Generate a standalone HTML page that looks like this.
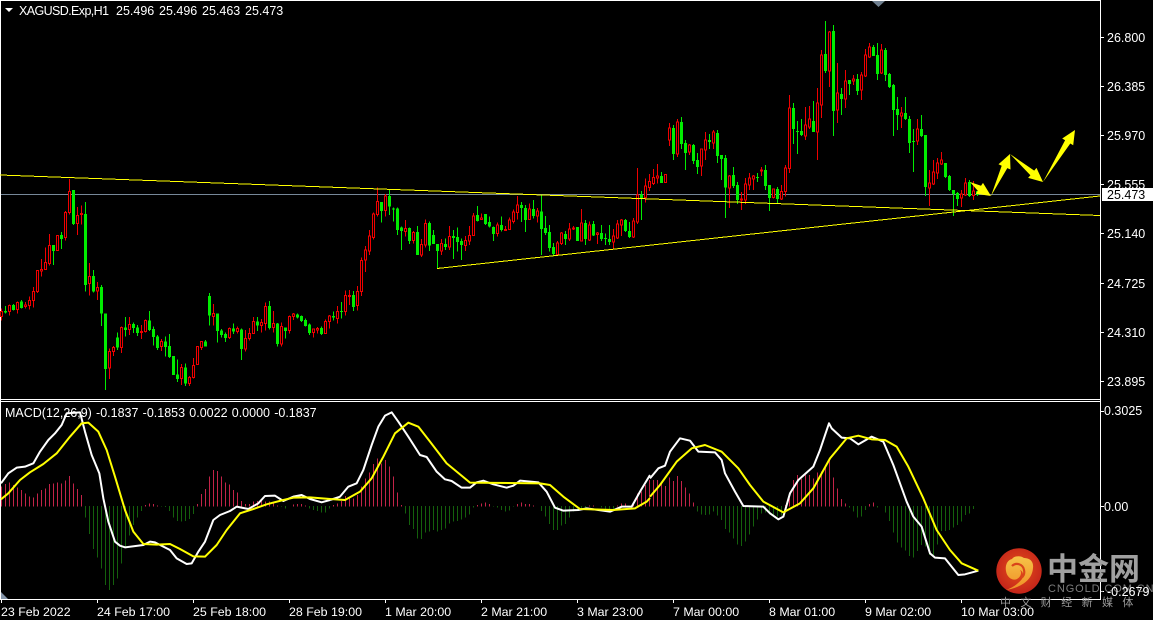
<!DOCTYPE html>
<html><head><meta charset="utf-8"><style>
html,body{margin:0;padding:0;background:#000}
#c{position:relative;width:1153px;height:620px;overflow:hidden;background:#000;font:12.5px/14px "Liberation Sans",sans-serif;color:#fff}
#c svg{position:absolute;left:0;top:0}
.t{position:absolute;white-space:pre}
path{fill:none}
.gw{stroke:#00ec00;stroke-width:3}
.gb{stroke:#00ec00;stroke-width:9}
.rw{stroke:#f00000;stroke-width:3}
.rb{stroke:#f00000;stroke-width:3;fill:#000}
.hr{stroke:#c32348;stroke-width:3}
.hg{stroke:#14600c;stroke-width:3}
.w{fill:none;stroke:#fff;stroke-width:6;stroke-linejoin:round}
.y{fill:none;stroke:#ff0;stroke-width:6;stroke-linejoin:round}
</style></head><body><div id="c">
<svg width="1153" height="620" viewBox="0 0 1153 620">
<g shape-rendering="crispEdges">
<rect x="0" y="0" width="1101" height="1" fill="#fff"/>
<rect x="0" y="0" width="1" height="600" fill="#fff"/>
<rect x="1100" y="0" width="1" height="600" fill="#fff"/>
<rect x="0" y="399" width="1101" height="1" fill="#fff"/>
<rect x="0" y="401" width="1101" height="1" fill="#fff"/>
<rect x="0" y="599" width="1101" height="1" fill="#fff"/>
<path d="M1101 37.5h3M1101 86.5h3M1101 135.5h3M1101 184.5h3M1101 233.5h3M1101 283.5h3M1101 332.5h3M1101 381.5h3M1101 411.5h3M1101 506.5h3M1101 591.5h3M1.5 600v3M97.5 600v3M193.5 600v3M289.5 600v3M385.5 600v3M481.5 600v3M577.5 600v3M673.5 600v3M769.5 600v3M865.5 600v3M961.5 600v3" stroke="#fff" stroke-width="1"/>
<rect x="1" y="194" width="1099" height="1" fill="#778899"/>
</g>
<path d="M872 1h13l-6.500 6z" style="fill:#708090"/>
<path d="M1 592l7 7h-7z" style="fill:#8494a8"/>

<g shape-rendering="crispEdges" transform="translate(0,170) scale(.33333)">
<path class="gw" d="M16.500 408V430M40.500 402V422M64.500 390V416M160.500 225V285M184.500 186V237M220.500 60V165M256.500 96V365M280.500 300V367M304.500 345V468M316.500 430V660M352.500 487V540M376.500 441V500M400.500 458V489M412.500 465V498M448.500 423V483M460.500 470V527M472.500 495V540M496.500 500V560M508.500 492V564M520.500 558V615M532.500 568V636M556.500 580V648M616.500 510V530M628.500 369V467M652.500 430V518M664.500 477V503M676.500 487V516M700.500 460V492M724.500 476V570M772.500 441V483M808.500 393V479M832.500 459V530M856.500 472V505M892.500 431V446"/>
<path class="gb" d="M16.500 423V427M40.500 405V420M64.500 394V414M160.500 225V243M184.500 195V207M220.500 60V162M256.500 132V345M280.500 318V365M304.500 351V431M316.500 430V597M352.500 502V533M376.500 472V480M400.500 462V474M412.500 472V489M448.500 451V480M460.500 477V501M472.500 499V534M496.500 514V531M508.500 528V561M520.500 558V615M532.500 613V627M556.500 592V640M616.500 514V530M628.500 378V437M652.500 430V483M664.500 481V495M676.500 492V504M700.500 475V484M724.500 478V537M772.500 454V467M808.500 408V474M832.500 460V522M856.500 472V483M892.500 433V443"/>
<path class="rw" d="M4.500 415V452M28.500 403V437M52.500 395V431M76.500 396V415M88.500 380V419M100.500 351V413M112.500 300V369M124.500 267V320M136.500 232V300M148.500 192V287M172.500 195V243M196.500 123V212M208.500 27V134M232.500 111V195M244.500 106V163M268.500 279V377M292.500 336V390M328.500 535V627M340.500 528V558M364.500 470V549M388.500 441V495M424.500 465V507M436.500 448V487M484.500 507V543M544.500 582V645M568.500 618V648M580.500 564V625M592.500 529V585M604.500 514V540M640.500 402V467M688.500 472V507M712.500 470V490M736.500 480V545M748.500 474V512M760.500 441V491M784.500 447V488M796.500 397V482M820.500 423V487M844.500 457V530M868.500 437V491M880.500 429V450"/>
<path class="rb" d="M1.500 425h6V440h-6zM25.500 406h6V424h-6zM49.500 397h6V419h-6zM73.500 405h6V410h-6zM85.500 391h6V407h-6zM97.500 364h6V392h-6zM109.500 301h6V365h-6zM121.500 298h6V303h-6zM133.500 277h6V298h-6zM145.500 226h6V280h-6zM169.500 196h6V242h-6zM193.500 127h6V203h-6zM205.500 65h6V128h-6zM229.500 136h6V161h-6zM241.500 130h6V134h-6zM265.500 319h6V341h-6zM289.500 352h6V363h-6zM325.500 544h6V594h-6zM337.500 532h6V544h-6zM361.500 473h6V532h-6zM385.500 463h6V479h-6zM421.500 485h6V488h-6zM433.500 451h6V485h-6zM481.500 514h6V530h-6zM541.500 592h6V626h-6zM565.500 622h6V640h-6zM577.500 586h6V623h-6zM589.500 529h6V584h-6zM601.500 515h6V533h-6zM637.500 430h6V440h-6zM685.500 475h6V503h-6zM709.500 475h6V484h-6zM733.500 505h6V537h-6zM745.500 491h6V506h-6zM757.500 454h6V491h-6zM781.500 457h6V467h-6zM793.500 409h6V460h-6zM817.500 460h6V473h-6zM841.500 469h6V522h-6zM865.500 439h6V482h-6zM877.500 432h6V440h-6z"/>
</g>

<g shape-rendering="crispEdges" transform="translate(296,250) scale(.33333)">
<path class="gw" d="M16.500 196V216M28.500 205V230M40.500 220V255M76.500 230V255M112.500 185V212M136.500 156V205M172.500 123V183"/>
<path class="gb" d="M16.500 198V213M28.500 210V228M40.500 224V249M76.500 234V252M112.500 198V202M136.500 183V186M172.500 135V171"/>
<path class="rw" d="M52.500 235V263M64.500 231V250M88.500 208V251M100.500 195V235M124.500 168V220M148.500 122V197M160.500 120V165M184.500 108V182M196.500 22V138"/>
<path class="rb" d="M49.500 237h6V248h-6zM61.500 235h6V240h-6zM85.500 214h6V250h-6zM97.500 198h6V215h-6zM121.500 184h6V205h-6zM145.500 136h6V185h-6zM157.500 136h6V139h-6zM181.500 124h6V167h-6zM193.500 31h6V125h-6z"/>
</g>

<g shape-rendering="crispEdges" transform="translate(300,170) scale(.33333)">
<path class="gw" d="M244.500 96V158M268.500 58V135M280.500 112V155M292.500 113V195M304.500 170V240M328.500 172V222M352.500 168V255M388.500 155V243M400.500 180V222M412.500 222V297M436.500 205V240M460.500 180V267M472.500 172V245M484.500 205V270M532.500 108V155M556.500 132V165M568.500 140V173M580.500 170V213M604.500 139V185M664.500 96V156M676.500 105V186M700.500 90V145M724.500 75V255M736.500 138V195M748.500 165V245M760.500 219V258M796.500 183V225M832.500 171V213M856.500 150V225M880.500 153V198M904.500 165V213M916.500 190V225M928.500 165V225M976.500 147V186M988.500 156V204"/>
<path class="gb" d="M244.500 96V123M268.500 78V110M280.500 115V119M292.500 115V180M304.500 172V183M328.500 174V213M352.500 186V255M388.500 159V226M400.500 195V222M412.500 222V243M436.500 222V231M460.500 198V204M472.500 201V216M484.500 213V225M532.500 135V153M556.500 132V162M568.500 156V170M580.500 171V192M604.500 165V180M664.500 105V114M676.500 114V150M700.500 117V138M724.500 125V177M736.500 174V189M748.500 186V234M760.500 231V252M796.500 192V207M832.500 171V213M856.500 159V207M880.500 162V196M904.500 189V207M916.500 204V207M928.500 207V216M976.500 150V183M988.500 183V201"/>
<path class="rw" d="M196.500 228V306M208.500 180V255M220.500 127V208M232.500 52V140M256.500 72V140M316.500 150V200M340.500 183V220M364.500 207V261M376.500 148V233M424.500 207V255M448.500 168V240M496.500 198V243M508.500 168V225M520.500 129V198M544.500 130V150M592.500 158V200M616.500 168V183M628.500 143V180M640.500 118V160M652.500 78V148M688.500 100V150M712.500 114V158M772.500 213V255M784.500 186V225M808.500 159V213M820.500 168V180M844.500 117V215M868.500 155V213M892.500 186V222M940.500 177V235M952.500 150V207M964.500 147V198M1000.500 144V204M1012.500 -6V162"/>
<path class="rb" d="M193.500 240h6V270h-6zM205.500 198h6V243h-6zM217.500 132h6V202h-6zM229.500 94h6V134h-6zM253.500 78h6V122h-6zM313.500 175h6V185h-6zM337.500 187h6V212h-6zM361.500 223h6V255h-6zM373.500 160h6V225h-6zM421.500 220h6V243h-6zM445.500 199h6V231h-6zM493.500 211h6V227h-6zM505.500 196h6V213h-6zM517.500 138h6V196h-6zM541.500 144h6V149h-6zM589.500 165h6V191h-6zM613.500 178h6V181h-6zM625.500 150h6V179h-6zM637.500 126h6V155h-6zM649.500 105h6V128h-6zM685.500 117h6V149h-6zM709.500 123h6V138h-6zM769.500 219h6V254h-6zM781.500 189h6V220h-6zM805.500 177h6V207h-6zM817.500 174h6V177h-6zM841.500 159h6V213h-6zM865.500 165h6V210h-6zM889.500 189h6V193h-6zM937.500 198h6V216h-6zM949.500 162h6V204h-6zM961.500 150h6V165h-6zM997.500 153h6V201h-6zM1009.500 75h6V156h-6z"/>
</g>

<g shape-rendering="crispEdges" transform="translate(640,100) scale(.33333)">
<path class="gw" d="M4.500 273V360M64.500 216V249M100.500 75V180M124.500 51V147M136.500 120V210M160.500 132V192M172.500 159V222M208.500 102V147M232.500 90V189M244.500 165V240M256.500 165V354M280.500 201V264M292.500 246V312M352.500 219V246M376.500 195V270M388.500 255V333"/>
<path class="gb" d="M4.500 283V295M64.500 228V249M100.500 84V162M124.500 66V132M136.500 129V159M160.500 135V183M172.500 180V201M208.500 120V126M232.500 99V168M244.500 165V177M256.500 174V262M280.500 225V258M292.500 255V300M352.500 231V234M376.500 210V258M388.500 255V294"/>
<path class="rw" d="M16.500 235V308M28.500 222V273M40.500 207V255M52.500 192V250M76.500 222V248M88.500 69V138M112.500 57V171M148.500 132V165M184.500 147V228M196.500 96V180M220.500 90V147M268.500 225V324M304.500 276V330M316.500 234V312M328.500 219V270M340.500 225V270M364.500 201V228"/>
<path class="rb" d="M13.500 258h6V293h-6zM25.500 245h6V262h-6zM37.500 232h6V250h-6zM49.500 228h6V234h-6zM73.500 223h6V248h-6zM85.500 84h6V120h-6zM109.500 66h6V162h-6zM145.500 135h6V156h-6zM181.500 147h6V198h-6zM193.500 120h6V150h-6zM217.500 96h6V129h-6zM265.500 228h6V264h-6zM301.500 297h6V300h-6zM313.500 252h6V300h-6zM325.500 234h6V255h-6zM337.500 228h6V237h-6zM361.500 210h6V213h-6z"/>
</g>

<g shape-rendering="crispEdges" transform="translate(770,10) scale(.33333)">
<path class="gw" d="M22.500 531V582M70.500 279V402M82.500 333V432M94.500 327V378M130.500 273V366M166.500 33V189M190.500 45V378M214.500 234V315M238.500 210V255M262.500 192V255M310.500 105V138M322.500 99V210M346.500 114V213M358.500 189V234M370.500 222V378M382.500 261V360M406.500 261V330M418.500 318V429M430.500 357V486M454.500 315V381M466.500 375V558M526.500 459V504M538.500 495V543M550.500 540V618M562.500 546V588M598.500 510V561M622.500 543V558"/>
<path class="gb" d="M22.500 537V567M70.500 294V357M82.500 363V366M94.500 363V375M130.500 333V366M166.500 132V183M190.500 63V303M214.500 252V267M238.500 210V222M262.500 207V243M310.500 111V138M322.500 135V192M346.500 120V195M358.500 192V231M370.500 225V300M382.500 297V315M406.500 309V327M418.500 327V399M430.500 393V396M454.500 357V378M466.500 375V531M526.500 459V501M538.500 498V540M550.500 540V552M562.500 549V567M598.500 516V558M622.500 543V555"/>
<path class="rw" d="M10.500 537V565M34.500 525V570M46.500 465V560M58.500 255V489M106.500 291V390M118.500 288V357M142.500 234V450M154.500 120V324M178.500 63V231M202.500 159V339M226.500 180V294M250.500 195V225M274.500 186V270M286.500 117V201M298.500 99V144M334.500 102V192M394.500 291V354M442.500 327V405M478.500 480V588M490.500 450V525M502.500 444V507M514.500 426V465M574.500 540V591M586.500 504V558M610.500 513V570"/>
<path class="rb" d="M7.500 537h6V563h-6zM31.500 545h6V567h-6zM43.500 474h6V545h-6zM55.500 294h6V476h-6zM103.500 345h6V378h-6zM115.500 327h6V351h-6zM139.500 279h6V366h-6zM151.500 135h6V285h-6zM175.500 66h6V183h-6zM199.500 249h6V300h-6zM223.500 213h6V267h-6zM247.500 207h6V213h-6zM271.500 195h6V240h-6zM283.500 135h6V198h-6zM295.500 111h6V141h-6zM331.500 120h6V189h-6zM391.500 309h6V318h-6zM439.500 357h6V393h-6zM475.500 519h6V534h-6zM487.500 486h6V522h-6zM499.500 459h6V489h-6zM511.500 450h6V462h-6zM571.500 552h6V564h-6zM583.500 519h6V555h-6zM607.500 543h6V556h-6z"/>
</g>

<g shape-rendering="crispEdges" stroke="#ffff00" stroke-width="1" fill="none">
<line x1="0" y1="175" x2="1100" y2="215.500"/>
<line x1="437" y1="268.500" x2="1100" y2="196"/>
</g>

<g fill="#ffff00">
<polygon points="970,182 981,185.800 983,182.900 991,196 975.800,193.700 977.800,190.800"/>
<polygon points="991,196 1001.700,165.700 998.500,164.300 1010,154 1010.500,169.500 1007.300,168.100"/>
<polygon points="1010,154 1034.200,170.600 1036.500,167.900 1043,182 1028.100,177.900 1030.400,175.200"/>
<polygon points="1043,182 1065.100,140.300 1062.200,138.500 1075,130 1073.200,145.300 1070.300,143.500"/>
</g>

<!-- histogram -->
<g shape-rendering="crispEdges" transform="translate(0,395) scale(.33333)">
<path class="hr" d="M4.500 275V335M16.500 267V335M28.500 262V335M40.500 270V335M52.500 277V335M64.500 285V335M76.500 295V335M88.500 305V335M100.500 307V335M112.500 295V335M124.500 285V335M136.500 280V335M148.500 267V335M160.500 266V335M172.500 262V335M184.500 265V335M196.500 257V335M208.500 243V335M220.500 265V335M232.500 282V335M244.500 300V335M436.500 330V335M448.500 325V335M460.500 327V335M472.500 332V335M592.500 327V335M604.500 297V335M616.500 282V335M628.500 245V335M640.500 225V335M652.500 228V335M664.500 245V335M676.500 262V335M688.500 268V335M700.500 285V335M712.500 292V335M724.500 318V335M736.500 327V335M748.500 327V335M760.500 320V335M772.500 318V335M784.500 315V335M796.500 320V335M808.500 320V335M820.500 322V335M832.500 332V335M880.500 328V335M892.500 327V335M904.500 327V335M916.500 332V335"/>
<path class="hg" d="M256.500 333V368M268.500 333V417M280.500 333V462M292.500 333V487M304.500 333V520M316.500 333V570M328.500 333V585M340.500 333V570M352.500 333V550M364.500 333V505M376.500 333V455M388.500 333V422M400.500 333V390M412.500 333V367M424.500 333V348M484.500 333V335M496.500 333V336M508.500 333V348M520.500 333V368M532.500 333V378M544.500 333V380M556.500 333V378M568.500 333V372M580.500 333V357M844.500 333V335M856.500 333V340M928.500 333V340M940.500 333V345M952.500 333V348M964.500 333V352M976.500 333V352M988.500 333V340"/>
</g>
<g shape-rendering="crispEdges" transform="translate(330,395) scale(.33333)">
<path class="hr" d="M10.500 330V335M22.500 325V335M34.500 318V335M46.500 303V335M58.500 305V335M70.500 310V335M82.500 300V335M94.500 275V335M106.500 250V335M118.500 232V335M130.500 207V335M142.500 190V335M154.500 205V335M166.500 195V335M178.500 215V335M190.500 245V335M202.500 292V335M214.500 330V335M442.500 330V335M454.500 325V335M466.500 323V335M478.500 327V335M562.500 327V335M574.500 322V335M586.500 327V335M598.500 327V335M610.500 332V335M778.500 331V335M790.500 332V335M862.500 332V335M874.500 325V335M886.500 325V335M910.500 330V335M922.500 295V335M934.500 290V335M946.500 270V335M958.500 255V335"/>
<path class="hg" d="M226.500 333V355M238.500 333V390M250.500 333V402M262.500 333V430M274.500 333V432M286.500 333V413M298.500 333V410M310.500 333V405M322.500 333V410M334.500 333V405M346.500 333V400M358.500 333V385M370.500 333V380M382.500 333V378M394.500 333V373M406.500 333V368M418.500 333V358M430.500 333V338M490.500 333V335M502.500 333V338M514.500 333V345M526.500 333V350M538.500 333V347M550.500 333V335M634.500 333V348M646.500 333V365M658.500 333V387M670.500 333V405M682.500 333V405M694.500 333V392M706.500 333V387M718.500 333V368M730.500 333V350M742.500 333V345M754.500 333V340M766.500 333V337M814.500 333V338M826.500 333V342M838.500 333V345M850.500 333V343"/>
</g>
<g shape-rendering="crispEdges" transform="translate(650,395) scale(.33333)">
<path class="hr" d="M10.500 255V335M22.500 255V335M34.500 265V335M46.500 273V335M58.500 248V335M70.500 258V335M82.500 243V335M94.500 258V335M106.500 278V335M118.500 296V335M130.500 323V335M406.500 330V335M418.500 310V335M430.500 255V335M442.500 240V335M454.500 252V335M466.500 240V335M478.500 240V335M490.500 250V335M502.500 232V335M514.500 230V335M526.500 218V335M538.500 195V335M550.500 248V335M562.500 280V335M574.500 312V335M586.500 325V335M658.500 327V335M670.500 323V335"/>
<path class="hg" d="M142.500 333V350M154.500 333V358M166.500 333V360M178.500 333V358M190.500 333V350M202.500 333V362M214.500 333V375M226.500 333V402M238.500 333V413M250.500 333V430M262.500 333V448M274.500 333V453M286.500 333V440M298.500 333V418M310.500 333V395M322.500 333V373M334.500 333V355M346.500 333V352M358.500 333V358M370.500 333V360M382.500 333V365M394.500 333V362M598.500 333V338M610.500 333V350M622.500 333V368M634.500 333V365M646.500 333V345M682.500 333V338M706.500 333V352M718.500 333V378M730.500 333V412M742.500 333V442M754.500 333V457M766.500 333V467M778.500 333V483M790.500 333V488M802.500 333V468M814.500 333V450M826.500 333V455M838.500 333V480M850.500 333V480M862.500 333V448M874.500 333V408M886.500 333V408M898.500 333V405M910.500 333V397M922.500 333V390M934.500 333V380M946.500 333V360M958.500 333V355M970.500 333V342"/>
</g>

<!-- MACD lines -->
<g transform="translate(0,395) scale(.33333)">
<polyline class="w" points="3,265 25,235 50,218 75,215 100,205 120,170 145,135 165,115 185,90 200,55 240,52 255,110 275,180 298,235 310,310 325,380 345,440 360,452 375,457 430,450 450,440 465,442 490,455 510,465 530,490 560,507 575,505 595,470 615,440 640,375 660,360 690,348 710,335 745,342 775,325 795,303 825,302 850,318 880,305 905,300 930,312 965,322 990,315"/>
<polyline class="y" points="3,313 25,295 60,255 90,232 130,207 170,175 210,125 245,85 265,83 295,110 320,165 345,245 375,345 400,410 430,447 470,449 510,447 540,462 580,484 615,485 650,450 680,405 720,355 760,342 800,328 850,315 880,308 930,307 990,312"/>
</g>
<g transform="translate(330,395) scale(.33333)">
<polyline class="w" points="0,315 30,305 55,275 80,265 100,225 125,150 145,95 165,62 185,52 205,80 235,125 270,180 290,186 320,230 345,253 365,258 395,278 420,278 440,262 460,257 490,268 530,278 550,272 570,257 625,262 650,290 675,338 700,347 745,345 770,340 840,350 875,335 905,335 930,290 960,240"/>
<polyline class="y" points="0,312 45,315 90,290 125,250 160,185 195,115 235,83 265,95 300,140 350,205 420,263 630,265 660,270 700,305 750,342 850,345 915,340 950,320 960,309"/>
</g>
<g transform="translate(650,395) scale(.33333)">
<polyline class="w" points="0,250 25,220 45,212 60,170 90,130 120,137 145,170 195,172 215,195 225,235 255,290 280,333 340,335 360,355 385,373 400,365 420,295 445,255 490,215 510,165 537,85 545,100 575,128 600,130 625,148 665,125 700,140 730,210 770,320 790,365 815,395 840,475 855,488 885,490 925,540 945,538 985,527"/>
<polyline class="y" points="0,305 30,270 80,200 125,160 165,150 215,170 265,220 300,270 340,320 400,352 450,325 490,280 540,190 590,130 625,122 665,133 705,135 740,155 775,215 820,310 860,405 900,465 935,505 985,527"/>
</g>

<polygon points="5,8 13,8 9,12" fill="#fff"/>

<!-- logo -->
<defs>
<radialGradient id="lg" cx="50%" cy="45%" r="55%"><stop offset="0" stop-color="#e4501a"/><stop offset="1" stop-color="#c4241a"/></radialGradient>
<linearGradient id="ly" x1="0" y1="0" x2="0" y2="1"><stop offset="0" stop-color="#f6c348"/><stop offset="1" stop-color="#ef8f26"/></linearGradient>
</defs>
<circle cx="1019" cy="571" r="22.700" fill="url(#lg)"/>
<path d="M1006 590C1018 588 1032 582 1033 568C1034 560 1028 558 1024 558C1020 555 1014 556 1012 559C1007 560 1005 566 1006 571C1007 578 1013 581 1017 579C1021 577 1022 572 1020 570C1023 571 1024 575 1022 579C1018 584 1012 588 1006 590Z" style="fill:url(#ly)"/>
<path d="M1012 566C1016 562 1023 564 1024 570C1025 574 1023 577 1021 578" style="fill:none;stroke:#d9451a;stroke-width:2.200"/>
</svg>

<div class="t" style="left:1047px;top:546px;font:bold 31px/42px 'Noto Sans CJK SC',sans-serif;color:#a0a0a0">中金网</div>
<div class="t" style="left:1048px;top:583px;font:11px/12px 'Liberation Sans',sans-serif;letter-spacing:.9px;color:#7c7c7c">CNGOLD.COM.CN</div>
<div class="t" style="left:1000px;top:595px;font:11px/14px 'Noto Sans CJK SC',sans-serif;letter-spacing:9.400px;color:#999">中文财经新媒体</div>

<div class="t" style="left:19px;top:4px;letter-spacing:-.6px">XAGUSD.Exp,H1</div>
<div class="t" style="left:116px;top:4px;word-spacing:1.300px">25.496 25.496 25.463 25.473</div>
<div class="t" style="left:5px;top:406px;word-spacing:.75px">MACD(12,26,9) -0.1837 -0.1853 0.0022 0.0000 -0.1837</div>

<div class="t" style="left:1107px;top:31px">26.800</div>
<div class="t" style="left:1107px;top:80px">26.385</div>
<div class="t" style="left:1107px;top:129px">25.970</div>
<div class="t" style="left:1107px;top:178px">25.555</div>
<div class="t" style="left:1107px;top:227px">25.140</div>
<div class="t" style="left:1107px;top:277px">24.725</div>
<div class="t" style="left:1107px;top:326px">24.310</div>
<div class="t" style="left:1107px;top:375px">23.895</div>
<div style="position:absolute;left:1102px;top:188px;width:51px;height:13px;background:#fff"></div>
<div class="t" style="left:1107px;top:188px;color:#000">25.473</div>
<div class="t" style="left:1104px;top:404px">0.3025</div>
<div class="t" style="left:1104px;top:500px">0.00</div>
<div class="t" style="left:1107px;top:585px">-0.2679</div>

<div class="t" style="left:1px;top:605px;font-size:12.400px">23 Feb 2022</div>
<div class="t" style="left:97px;top:605px;font-size:12.400px">24 Feb 17:00</div>
<div class="t" style="left:193px;top:605px;font-size:12.400px">25 Feb 18:00</div>
<div class="t" style="left:289px;top:605px;font-size:12.400px">28 Feb 19:00</div>
<div class="t" style="left:385px;top:605px;font-size:12.400px">1 Mar 20:00</div>
<div class="t" style="left:481px;top:605px;font-size:12.400px">2 Mar 21:00</div>
<div class="t" style="left:577px;top:605px;font-size:12.400px">3 Mar 23:00</div>
<div class="t" style="left:673px;top:605px;font-size:12.400px">7 Mar 00:00</div>
<div class="t" style="left:769px;top:605px;font-size:12.400px">8 Mar 01:00</div>
<div class="t" style="left:865px;top:605px;font-size:12.400px">9 Mar 02:00</div>
<div class="t" style="left:961px;top:605px;font-size:12.400px">10 Mar 03:00</div>
</div></body></html>
